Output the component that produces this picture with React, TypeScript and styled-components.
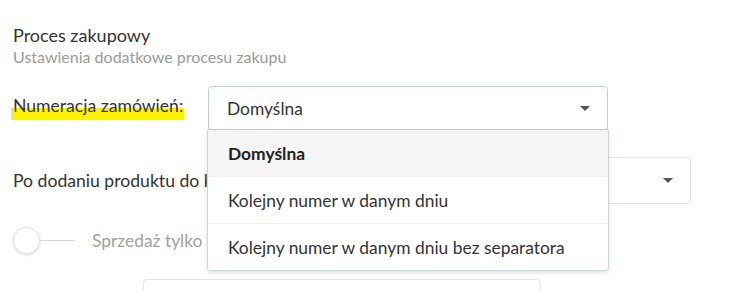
import React from 'react'
import styled, { createGlobalStyle } from 'styled-components'

const GlobalStyle = createGlobalStyle`
  body {
    margin: 0;
    background: #fff;
    font-family: Lato, "Open Sans", sans-serif;
    color: #333;
  }
`

const Page = styled.div`
  width: 730px;
  height: 290px;
  overflow: hidden;
  padding: 25px 0 0 13px;
  box-sizing: border-box;
  display: flex;
  flex-direction: column;
`

const Title = styled.div`
  font-size: 18px;
  line-height: 20px;
  color: #333;
`

const Subtitle = styled.div`
  margin-top: 3px;
  font-size: 16px;
  line-height: 18px;
  color: #9a9a9a;
`

const FormRow = styled.div<{ $top: number }>`
  display: flex;
  align-items: center;
  margin-top: ${p => p.$top}px;
`

const Label = styled.div<{ $width: number }>`
  width: ${p => p.$width}px;
  flex-shrink: 0;
  font-size: 17.6px;
  line-height: 20px;
  color: #333;
  white-space: nowrap;
`

const Marker = styled.span`
  display: inline-block;
  margin-left: -2px;
  padding: 0 1px 4px 2px;
  background: linear-gradient(transparent 50%, #fff200 50%);
`

const SelectWrap = styled.div<{ $width: number; $open?: boolean }>`
  position: relative;
  width: ${p => p.$width}px;
  flex-shrink: 0;
  z-index: ${p => (p.$open ? 2 : 1)};
`

const SelectBox = styled.div<{ $height: number; $focused?: boolean }>`
  box-sizing: border-box;
  height: ${p => p.$height}px;
  display: flex;
  align-items: center;
  justify-content: space-between;
  padding: 0 17px 0 18px;
  border: 1px solid ${p => (p.$focused ? '#b9d3d9' : '#e3e3e3')};
  border-radius: ${p => (p.$focused ? '4px 4px 0 0' : '4px')};
  background: #fff;
  font-size: 17.4px;
  color: #333;
`

const Caret = styled.span`
  width: 0;
  height: 0;
  border-left: 5px solid transparent;
  border-right: 5px solid transparent;
  border-top: 5px solid #555;
`

const Menu = styled.ul`
  position: absolute;
  top: 100%;
  left: -1px;
  right: -1px;
  margin: 0;
  padding: 0;
  list-style: none;
  background: #fff;
  border: 1px solid #c9dade;
  border-top: none;
  border-radius: 0 0 4px 4px;
  box-shadow: 0 2px 4px rgba(0, 0, 0, 0.12);
  overflow: hidden;
`

const MenuItem = styled.li<{ $active?: boolean }>`
  height: 46px;
  display: flex;
  align-items: center;
  padding-left: 20px;
  font-size: 17.4px;
  font-weight: ${p => (p.$active ? 700 : 400)};
  color: ${p => (p.$active ? '#222' : '#333')};
  background: ${p => (p.$active ? '#f5f5f5' : '#fff')};
  & + & {
    border-top: 1px solid #f1f1f1;
  }
`

const ToggleRow = styled.div`
  display: flex;
  align-items: center;
  height: 30px;
  margin-top: 23px;
  gap: 17px;
`

const Toggle = styled.div`
  display: flex;
  align-items: center;
  width: 62px;
`

const Knob = styled.span`
  width: 27px;
  height: 27px;
  box-sizing: border-box;
  border-radius: 50%;
  background: #fff;
  border: 1px solid #e2e2e2;
  box-shadow: 0 1px 3px rgba(0, 0, 0, 0.15);
  flex-shrink: 0;
`

const Track = styled.span`
  flex: 1;
  height: 1px;
  background: #d8d8d8;
`

const ToggleText = styled.span`
  font-size: 17.4px;
  color: #a0a0a0;
`

const Input = styled.div`
  margin: 25px 0 0 130px;
  width: 398px;
  height: 44px;
  flex-shrink: 0;
  box-sizing: border-box;
  border: 1px solid #e3e3e3;
  border-radius: 4px;
  background: #fff;
`

const options = [
  'Domyślna',
  'Kolejny numer w danym dniu',
  'Kolejny numer w danym dniu bez separatora',
]

const App = () => {
  return (
    <>
      <GlobalStyle />
      <Page>
        <Title>Proces zakupowy</Title>
        <Subtitle>Ustawienia dodatkowe procesu zakupu</Subtitle>

        <FormRow $top={20}>
          <Label $width={195}>
            <Marker>Numeracja zamówień:</Marker>
          </Label>
          <SelectWrap $width={400} $open>
            <SelectBox $height={44} $focused>
              <span>Domyślna</span>
              <Caret />
            </SelectBox>
            <Menu>
              {options.map((o, i) => (
                <MenuItem key={o} $active={i === 0}>{o}</MenuItem>
              ))}
            </Menu>
          </SelectWrap>
        </FormRow>

        <FormRow $top={27}>
          <Label $width={277}>Po dodaniu produktu do koszyka:</Label>
          <SelectWrap $width={401}>
            <SelectBox $height={47}>
              <span>Pokaż okno</span>
              <Caret />
            </SelectBox>
          </SelectWrap>
        </FormRow>

        <ToggleRow>
          <Toggle>
            <Knob />
            <Track />
          </Toggle>
          <ToggleText>Sprzedaż tylko dostępnych</ToggleText>
        </ToggleRow>

        <Input />
      </Page>
    </>
  )
}

export default App
